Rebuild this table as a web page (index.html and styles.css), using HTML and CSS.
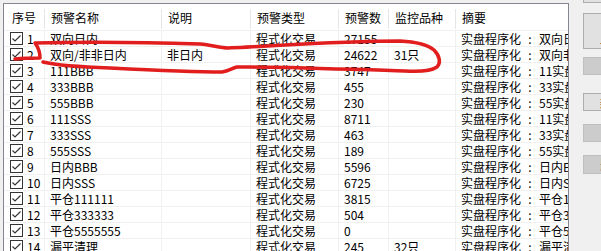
FILE: index.html
```html
<!DOCTYPE html>
<html lang="zh-CN">
<head>
<meta charset="utf-8">
<title>预警列表</title>
<link rel="stylesheet" href="styles.css">
</head>
<body>
<div class="app">
  <div class="list">
    <div class="hdr">
      <div class="hc first">序号</div>
      <div class="hc">预警名称</div>
      <div class="hc">说明</div>
      <div class="hc">预警类型</div>
      <div class="hc">预警数</div>
      <div class="hc">监控品种</div>
      <div class="hc last">摘要</div>
    </div>
    <div class="rows">
      <div class="row"><div class="cell num"><svg class="cb" width="13" height="13" viewBox="0 0 13 13"><rect x="0.5" y="0.5" width="12" height="12"/><path d="M2.5 6.5 L5 9 L10.5 3.5"/></svg><span>1</span></div><div class="cell">双向日内</div><div class="cell"></div><div class="cell">程式化交易</div><div class="cell">27155</div><div class="cell"></div><div class="cell sum">实盘程序化<span class="colon">:</span>双向日内</div></div>
      <div class="row"><div class="cell num"><svg class="cb" width="13" height="13" viewBox="0 0 13 13"><rect x="0.5" y="0.5" width="12" height="12"/><path d="M2.5 6.5 L5 9 L10.5 3.5"/></svg><span>2</span></div><div class="cell">双向/非非日内</div><div class="cell">非日内</div><div class="cell">程式化交易</div><div class="cell">24622</div><div class="cell">31只</div><div class="cell sum">实盘程序化<span class="colon">:</span>双向非非日内</div></div>
      <div class="row"><div class="cell num"><svg class="cb" width="13" height="13" viewBox="0 0 13 13"><rect x="0.5" y="0.5" width="12" height="12"/><path d="M2.5 6.5 L5 9 L10.5 3.5"/></svg><span>3</span></div><div class="cell">111BBB</div><div class="cell"></div><div class="cell">程式化交易</div><div class="cell">3747</div><div class="cell"></div><div class="cell sum">实盘程序化<span class="colon">:</span>11实盘</div></div>
      <div class="row"><div class="cell num"><svg class="cb" width="13" height="13" viewBox="0 0 13 13"><rect x="0.5" y="0.5" width="12" height="12"/><path d="M2.5 6.5 L5 9 L10.5 3.5"/></svg><span>4</span></div><div class="cell">333BBB</div><div class="cell"></div><div class="cell">程式化交易</div><div class="cell">455</div><div class="cell"></div><div class="cell sum">实盘程序化<span class="colon">:</span>33实盘</div></div>
      <div class="row"><div class="cell num"><svg class="cb" width="13" height="13" viewBox="0 0 13 13"><rect x="0.5" y="0.5" width="12" height="12"/><path d="M2.5 6.5 L5 9 L10.5 3.5"/></svg><span>5</span></div><div class="cell">555BBB</div><div class="cell"></div><div class="cell">程式化交易</div><div class="cell">230</div><div class="cell"></div><div class="cell sum">实盘程序化<span class="colon">:</span>55实盘</div></div>
      <div class="row"><div class="cell num"><svg class="cb" width="13" height="13" viewBox="0 0 13 13"><rect x="0.5" y="0.5" width="12" height="12"/><path d="M2.5 6.5 L5 9 L10.5 3.5"/></svg><span>6</span></div><div class="cell">111SSS</div><div class="cell"></div><div class="cell">程式化交易</div><div class="cell">8711</div><div class="cell"></div><div class="cell sum">实盘程序化<span class="colon">:</span>11实盘</div></div>
      <div class="row"><div class="cell num"><svg class="cb" width="13" height="13" viewBox="0 0 13 13"><rect x="0.5" y="0.5" width="12" height="12"/><path d="M2.5 6.5 L5 9 L10.5 3.5"/></svg><span>7</span></div><div class="cell">333SSS</div><div class="cell"></div><div class="cell">程式化交易</div><div class="cell">463</div><div class="cell"></div><div class="cell sum">实盘程序化<span class="colon">:</span>33实盘</div></div>
      <div class="row"><div class="cell num"><svg class="cb" width="13" height="13" viewBox="0 0 13 13"><rect x="0.5" y="0.5" width="12" height="12"/><path d="M2.5 6.5 L5 9 L10.5 3.5"/></svg><span>8</span></div><div class="cell">555SSS</div><div class="cell"></div><div class="cell">程式化交易</div><div class="cell">189</div><div class="cell"></div><div class="cell sum">实盘程序化<span class="colon">:</span>55实盘</div></div>
      <div class="row"><div class="cell num"><svg class="cb" width="13" height="13" viewBox="0 0 13 13"><rect x="0.5" y="0.5" width="12" height="12"/><path d="M2.5 6.5 L5 9 L10.5 3.5"/></svg><span>9</span></div><div class="cell">日内BBB</div><div class="cell"></div><div class="cell">程式化交易</div><div class="cell">5596</div><div class="cell"></div><div class="cell sum">实盘程序化<span class="colon">:</span>日内BBB</div></div>
      <div class="row"><div class="cell num"><svg class="cb" width="13" height="13" viewBox="0 0 13 13"><rect x="0.5" y="0.5" width="12" height="12"/><path d="M2.5 6.5 L5 9 L10.5 3.5"/></svg><span>10</span></div><div class="cell">日内SSS</div><div class="cell"></div><div class="cell">程式化交易</div><div class="cell">6725</div><div class="cell"></div><div class="cell sum">实盘程序化<span class="colon">:</span>日内SSS</div></div>
      <div class="row"><div class="cell num"><svg class="cb" width="13" height="13" viewBox="0 0 13 13"><rect x="0.5" y="0.5" width="12" height="12"/><path d="M2.5 6.5 L5 9 L10.5 3.5"/></svg><span>11</span></div><div class="cell">平仓111111</div><div class="cell"></div><div class="cell">程式化交易</div><div class="cell">3815</div><div class="cell"></div><div class="cell sum">实盘程序化<span class="colon">:</span>平仓111111</div></div>
      <div class="row"><div class="cell num"><svg class="cb" width="13" height="13" viewBox="0 0 13 13"><rect x="0.5" y="0.5" width="12" height="12"/><path d="M2.5 6.5 L5 9 L10.5 3.5"/></svg><span>12</span></div><div class="cell">平仓333333</div><div class="cell"></div><div class="cell">程式化交易</div><div class="cell">504</div><div class="cell"></div><div class="cell sum">实盘程序化<span class="colon">:</span>平仓333333</div></div>
      <div class="row"><div class="cell num"><svg class="cb" width="13" height="13" viewBox="0 0 13 13"><rect x="0.5" y="0.5" width="12" height="12"/><path d="M2.5 6.5 L5 9 L10.5 3.5"/></svg><span>13</span></div><div class="cell">平仓5555555</div><div class="cell"></div><div class="cell">程式化交易</div><div class="cell">0</div><div class="cell"></div><div class="cell sum">实盘程序化<span class="colon">:</span>平仓5555555</div></div>
      <div class="row"><div class="cell num"><svg class="cb" width="13" height="13" viewBox="0 0 13 13"><rect x="0.5" y="0.5" width="12" height="12"/><path d="M2.5 6.5 L5 9 L10.5 3.5"/></svg><span>14</span></div><div class="cell">漏平清理</div><div class="cell"></div><div class="cell">程式化交易</div><div class="cell">245</div><div class="cell">32只</div><div class="cell sum">实盘程序化<span class="colon">:</span>漏平清理</div></div>
    </div>
  </div>
  <div class="side">
    <div class="btn b1"></div>
    <div class="btn b2"><span>上</span></div>
    <div class="btn off b3"></div>
    <div class="btn b4"><span>新</span></div>
    <div class="btn off b5"></div>
    <div class="btn off b6"><span>删</span></div>
  </div>
</div>
<svg class="mark" width="601" height="251" viewBox="0 0 601 251">
  <path d="M15 59 C25 58 34 58 40 58 C40 52 38 47 35 43 C70 42 140 42 200 44 C212 45 220 48 228 48 C265 47 330 41 400 41 C418 42 428 45 434 50 C440 56 441 63 437 67 C431 71 420 72 405 71 C360 70 280 66 237 67 C232 68 229 71 222 72 C190 72 150 70 110 68 C80 67 60 66 43 62"/>
</svg>
</body>
</html>
```

FILE: styles.css
```css
* { box-sizing: border-box; }

html, body {
  margin: 0;
  padding: 0;
  background: #f0f0f0;
  overflow: hidden;
  height: 251px;
}

body {
  font-family: "Noto Sans CJK SC", "Noto Sans", sans-serif;
  font-size: 12px;
  color: #000;
  position: relative;
}

.app {
  display: flex;
  align-items: flex-start;
  padding: 3px 0 0 3px;
  gap: 14px;
}

.list {
  width: 566px;
  height: 260px;
  flex: none;
  background: #fff;
  border: 1px solid #828790;
  overflow: hidden;
}

.hdr,
.row {
  display: grid;
  grid-template-columns: 41px 117px 89px 88px 50px 67px 1fr;
}

.hdr {
  height: 27px;
  border-bottom: 1px solid #f0f0f0;
}

.hc {
  position: relative;
  padding-left: 6px;
  line-height: 27px;
  white-space: nowrap;
  overflow: hidden;
}

.hc.first { padding-left: 8px; }

.hc::after {
  content: "";
  position: absolute;
  right: 0;
  top: 5px;
  bottom: 1px;
  width: 1px;
  background: #e5e5e5;
}

.hc.last::after { display: none; }

.row {
  height: 16px;
  border-bottom: 1px solid #f0f0f0;
}

.cell {
  height: 15px;
  line-height: 15px;
  padding-left: 5px;
  border-right: 1px solid #f0f0f0;
  white-space: nowrap;
  overflow: hidden;
}

.cell.sum { border-right: none; }

.colon {
  display: inline-block;
  width: 18px;
  text-align: center;
}

.cell.num {
  display: flex;
  align-items: center;
  gap: 4px;
  padding-left: 6px;
}

.cb { flex: none; }
.cb rect { fill: #fff; stroke: #333; stroke-width: 1; }
.cb path { fill: none; stroke: #333; stroke-width: 1.2; }

.side {
  display: flex;
  flex-direction: column;
  margin-top: -20px;
  width: 40px;
  flex: none;
}

.btn {
  background: #e1e1e1;
  border: 1px solid #adadad;
  font-size: 12px;
  padding-left: 16px;
  color: #000;
  overflow: hidden;
  white-space: nowrap;
}

.btn.off {
  background: #cccccc;
  border-color: #bfbfbf;
  color: #6d6d6d;
}

.b1 { height: 20px; }
.b2 { height: 36px; margin-top: 10px; line-height: 50px; }
.b3 { height: 18px; margin-top: 8px; }
.b4 { height: 18px; margin-top: 18px; line-height: 20px; }
.b5 { height: 18px; margin-top: 13px; }
.b6 { height: 19px; margin-top: 13px; line-height: 18px; }

.mark {
  position: absolute;
  left: 0;
  top: 0;
  pointer-events: none;
}

.mark path {
  fill: none;
  stroke: #e11d1d;
  stroke-width: 3.5;
  stroke-linecap: round;
  stroke-linejoin: round;
}
```
